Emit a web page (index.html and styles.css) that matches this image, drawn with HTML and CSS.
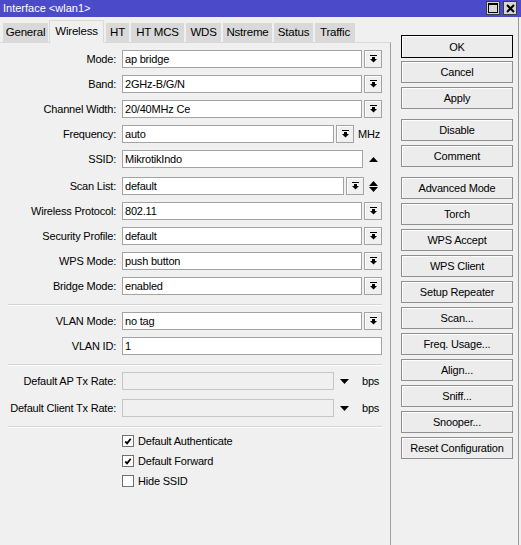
FILE: index.html
```html
<!DOCTYPE html>
<html lang="en">
<head>
    <meta charset="UTF-8">
    <title>Interface &lt;wlan1&gt;</title>
    <link rel="stylesheet" href="styles.css">
</head>
<body>
    <div class="titlebar">
        <span class="title">Interface &lt;wlan1&gt;</span>
        <div class="title_btns">
            <span class="tbtn">
                <svg width="10" height="10" viewBox="0 0 10 10"><rect x="0.5" y="0.5" width="9" height="9" fill="none" stroke="#000"/><rect x="0" y="0" width="10" height="2" fill="#000"/></svg>
            </span>
            <span class="tbtn">
                <svg width="9" height="9" viewBox="0 0 9 9"><path d="M1 1L8 8M8 1L1 8" stroke="#000" stroke-width="2"/></svg>
            </span>
        </div>
    </div>
    <div class="main">
        <div class="left">
            <div class="tabs">
                <span class="tab w_general">General</span>
                <span class="tab active w_wireless">Wireless</span>
                <span class="tab w_ht">HT</span>
                <span class="tab w_htmcs">HT MCS</span>
                <span class="tab w_wds">WDS</span>
                <span class="tab w_nstreme">Nstreme</span>
                <span class="tab w_status">Status</span>
                <span class="tab w_traffic">Traffic</span>
            </div>
            <div class="page">
                <div class="group">
                    <div class="row">
                        <label>Mode:</label>
                        <div class="field">ap bridge</div>
                        <span class="dd"><svg width="7" height="8" viewBox="0 0 7 8"><rect width="7" height="1"/><rect x="2" y="2" width="3" height="2"/><path d="M0 4h7L3.5 7.5z"/></svg></span>
                    </div>
                    <div class="row">
                        <label>Band:</label>
                        <div class="field">2GHz-B/G/N</div>
                        <span class="dd"><svg width="7" height="8" viewBox="0 0 7 8"><rect width="7" height="1"/><rect x="2" y="2" width="3" height="2"/><path d="M0 4h7L3.5 7.5z"/></svg></span>
                    </div>
                    <div class="row">
                        <label>Channel Width:</label>
                        <div class="field">20/40MHz Ce</div>
                        <span class="dd"><svg width="7" height="8" viewBox="0 0 7 8"><rect width="7" height="1"/><rect x="2" y="2" width="3" height="2"/><path d="M0 4h7L3.5 7.5z"/></svg></span>
                    </div>
                    <div class="row">
                        <label>Frequency:</label>
                        <div class="field short">auto</div>
                        <span class="dd"><svg width="7" height="8" viewBox="0 0 7 8"><rect width="7" height="1"/><rect x="2" y="2" width="3" height="2"/><path d="M0 4h7L3.5 7.5z"/></svg></span>
                        <span class="unit">MHz</span>
                    </div>
                    <div class="row">
                        <label>SSID:</label>
                        <div class="field">MikrotikIndo</div>
                        <span class="side"><svg width="9" height="5" viewBox="0 0 9 5"><path d="M4.5 0L9 5H0z"/></svg></span>
                    </div>
                    <div class="row scan">
                        <label>Scan List:</label>
                        <div class="field">default</div>
                        <span class="dd"><svg width="7" height="8" viewBox="0 0 7 8"><rect width="7" height="1"/><rect x="2" y="2" width="3" height="2"/><path d="M0 4h7L3.5 7.5z"/></svg></span>
                        <span class="side narrow"><svg width="9" height="11" viewBox="0 0 9 11"><path d="M4.5 0L9 5H0z M0 6h9L4.5 11z"/></svg></span>
                    </div>
                    <div class="row">
                        <label>Wireless Protocol:</label>
                        <div class="field">802.11</div>
                        <span class="dd"><svg width="7" height="8" viewBox="0 0 7 8"><rect width="7" height="1"/><rect x="2" y="2" width="3" height="2"/><path d="M0 4h7L3.5 7.5z"/></svg></span>
                    </div>
                    <div class="row">
                        <label>Security Profile:</label>
                        <div class="field">default</div>
                        <span class="dd"><svg width="7" height="8" viewBox="0 0 7 8"><rect width="7" height="1"/><rect x="2" y="2" width="3" height="2"/><path d="M0 4h7L3.5 7.5z"/></svg></span>
                    </div>
                    <div class="row">
                        <label>WPS Mode:</label>
                        <div class="field">push button</div>
                        <span class="dd"><svg width="7" height="8" viewBox="0 0 7 8"><rect width="7" height="1"/><rect x="2" y="2" width="3" height="2"/><path d="M0 4h7L3.5 7.5z"/></svg></span>
                    </div>
                    <div class="row">
                        <label>Bridge Mode:</label>
                        <div class="field">enabled</div>
                        <span class="dd"><svg width="7" height="8" viewBox="0 0 7 8"><rect width="7" height="1"/><rect x="2" y="2" width="3" height="2"/><path d="M0 4h7L3.5 7.5z"/></svg></span>
                    </div>
                </div>
                <div class="sep"></div>
                <div class="group">
                    <div class="row">
                        <label>VLAN Mode:</label>
                        <div class="field">no tag</div>
                        <span class="dd"><svg width="7" height="8" viewBox="0 0 7 8"><rect width="7" height="1"/><rect x="2" y="2" width="3" height="2"/><path d="M0 4h7L3.5 7.5z"/></svg></span>
                    </div>
                    <div class="row">
                        <label>VLAN ID:</label>
                        <div class="field">1</div>
                    </div>
                </div>
                <div class="sep"></div>
                <div class="group">
                    <div class="row">
                        <label>Default AP Tx Rate:</label>
                        <div class="field short disabled"></div>
                        <span class="down"><svg width="9" height="5" viewBox="0 0 9 5"><path d="M0 0h9L4.5 5z"/></svg></span>
                        <span class="unit">bps</span>
                    </div>
                    <div class="row rate">
                        <label>Default Client Tx Rate:</label>
                        <div class="field short disabled"></div>
                        <span class="down"><svg width="9" height="5" viewBox="0 0 9 5"><path d="M0 0h9L4.5 5z"/></svg></span>
                        <span class="unit">bps</span>
                    </div>
                </div>
                <div class="sep"></div>
                <div class="checks">
                    <div class="chk">
                        <span class="box"><svg width="11" height="11" viewBox="0 0 11 11"><path d="M2.5 5.5l2 2 4-5" fill="none" stroke="#000" stroke-width="2"/></svg></span>
                        Default Authenticate
                    </div>
                    <div class="chk">
                        <span class="box"><svg width="11" height="11" viewBox="0 0 11 11"><path d="M2.5 5.5l2 2 4-5" fill="none" stroke="#000" stroke-width="2"/></svg></span>
                        Default Forward
                    </div>
                    <div class="chk">
                        <span class="box"></span>
                        Hide SSID
                    </div>
                </div>
            </div>
        </div>
        <div class="buttons">
            <button class="btn btn_default">OK</button>
            <button class="btn">Cancel</button>
            <button class="btn">Apply</button>
            <div class="btn_gap"></div>
            <button class="btn">Disable</button>
            <button class="btn">Comment</button>
            <div class="btn_gap"></div>
            <button class="btn">Advanced Mode</button>
            <button class="btn">Torch</button>
            <button class="btn">WPS Accept</button>
            <button class="btn">WPS Client</button>
            <button class="btn">Setup Repeater</button>
            <button class="btn">Scan...</button>
            <button class="btn">Freq. Usage...</button>
            <button class="btn">Align...</button>
            <button class="btn">Sniff...</button>
            <button class="btn">Snooper...</button>
            <button class="btn">Reset Configuration</button>
        </div>
    </div>
</body>
</html>
```
FILE: styles.css
```css
*{
    margin:0;
    padding:0;
    box-sizing: border-box;
}
body{
    width: 521px;
    height: 545px;
    overflow: hidden;
    background-color: #f0f0f0;
    font-family: "Liberation Sans", Arial, sans-serif;
    font-size: 11px;
    letter-spacing: -0.2px;
    color: #000;
}
/* title bar */
.titlebar{
    height: 17px;
    background-color: #4b4bc9;
    color: #fff;
    display: flex;
    justify-content: space-between;
    padding: 0 4px 0 3px;
}
.title{
    font-size: 11px;
    letter-spacing: 0;
    line-height: 16px;
}
.title_btns{
    display: flex;
    gap: 3px;
    margin-top: 1px;
}
.tbtn{
    width: 14px;
    height: 14px;
    background-color: #d6d6d6;
    border: 1px solid #3c3c3c;
    display: flex;
    align-items: center;
    justify-content: center;
}
.main{
    display: flex;
    width: 519px;
    height: 528px;
    border-right: 1px solid #9a9a9a;
}
.left{
    width: 391px;
    display: flex;
    flex-direction: column;
}
/* tabs */
.tabs{
    height: 25px;
    display: flex;
    align-items: flex-end;
    padding-left: 2px;
}
.tab{
    height: 19px;
    line-height: 18px;
    text-align: center;
    font-size: 11.5px;
    background-color: #d9d9d9;
    border-left: 1px solid #f0f0f0;
    margin-right: 1px;
}
.tab.active{
    height: 23px;
    line-height: 20px;
    background-color: #f0f0f0;
    border: 1px solid #d9d9d9;
    border-bottom: none;
    margin-bottom: -1px;
    position: relative;
    z-index: 1;
}
.w_general{ width: 46px; }
.w_wireless{ width: 55px; }
.w_ht{ width: 24px; }
.w_htmcs{ width: 54px; }
.w_wds{ width: 36px; }
.w_nstreme{ width: 50px; }
.w_status{ width: 40px; }
.w_traffic{ width: 41px; }
/* tab page */
.page{
    flex: 1;
    border-top: 1px solid #d9d9d9;
    border-right: 1px solid #a0a0a0;
    padding: 7px 8px 0 0;
}
.row{
    display: flex;
    align-items: center;
    height: 18px;
}
.row + .row{
    margin-top: 7px;
}
.row.scan, .row.rate{
    margin-top: 9px;
}
.row label{
    width: 116px;
    margin-right: 6px;
    text-align: right;
    white-space: nowrap;
}
.field{
    flex: 1;
    height: 18px;
    line-height: 16px;
    padding: 0 2px;
    background-color: #fff;
    border: 1px solid #a3a3a3;
    white-space: nowrap;
}
.field.short{
    flex: none;
    width: 212px;
}
.field.disabled{
    background-color: #f0f0f0;
    border-color: #c6c6c6;
}
.dd{
    width: 18px;
    height: 18px;
    margin-left: 2px;
    border: 1px solid #a3a3a3;
    background-color: #f0f0f0;
    box-shadow: inset 1px 1px 0 #fff;
    display: flex;
    align-items: center;
    justify-content: center;
}
.unit{
    margin-left: 4px;
}
.side{
    width: 19px;
    padding-left: 2px;
    display: flex;
    justify-content: center;
}
.side.narrow{
    width: 18px;
    padding-left: 1px;
}
.down{
    display: flex;
    margin-left: 6px;
    margin-right: 9px;
}
.sep{
    height: 2px;
    margin: 9px 0 6px 8px;
    border-top: 1px solid #d5d5d5;
    border-bottom: 1px solid #fff;
}
/* checkboxes */
.checks{
    padding-left: 122px;
    margin-top: -3px;
}
.chk{
    height: 20px;
    display: flex;
    align-items: center;
}
.box{
    width: 12px;
    height: 12px;
    margin-right: 4px;
    background-color: #fff;
    border: 1px solid #707070;
    display: flex;
    align-items: center;
    justify-content: center;
}
/* buttons */
.buttons{
    width: 112px;
    margin-left: 10px;
    padding-top: 18px;
    display: flex;
    flex-direction: column;
}
.btn{
    height: 22px;
    margin-bottom: 4px;
    font-family: inherit;
    font-size: 11px;
    letter-spacing: -0.2px;
    color: #000;
    background-color: #ececec;
    border: 1px solid #8f8f8f;
    box-shadow: inset 1px 1px 0 #fff;
}
.btn_default{
    height: 23px;
    margin-bottom: 3px;
    border-color: #000;
}
.btn_gap{
    height: 6px;
}
```
